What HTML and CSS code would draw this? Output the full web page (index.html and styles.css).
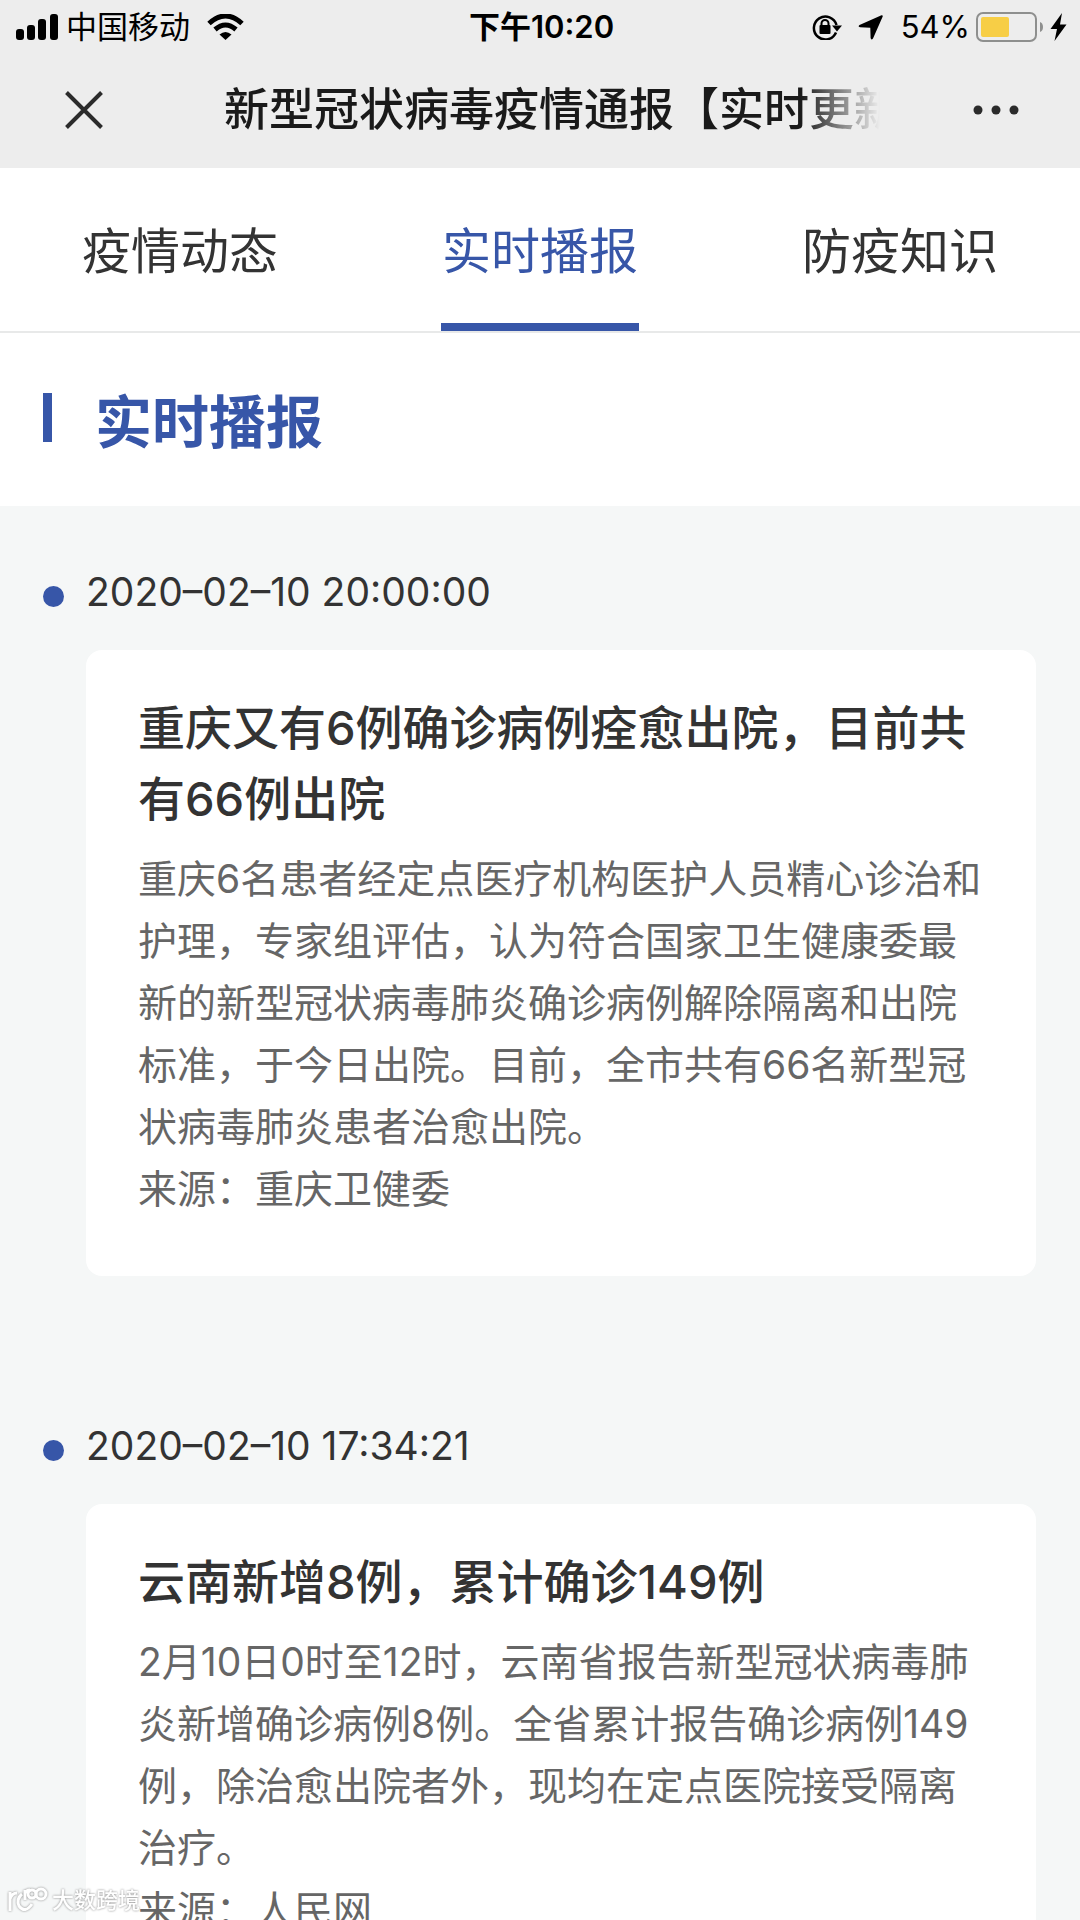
FILE: index.html
```html
<!DOCTYPE html>
<html lang="zh-CN">

<head>
    <meta charset="utf-8">
    <meta name="viewport" content="width=device-width, initial-scale=1">
    <title>新型冠状病毒疫情通报【实时更新】</title>
    <link rel="stylesheet" href="styles.css">
</head>

<body>
    <header class="top">
        <div class="status">
            <div class="status-left">
                <svg class="signal" width="42" height="26" viewBox="0 0 42 26">
                    <rect x="0" y="15" width="8" height="11" rx="3" />
                    <rect x="11" y="11" width="8" height="15" rx="3" />
                    <rect x="22" y="5" width="8" height="21" rx="3" />
                    <rect x="34" y="0" width="8" height="26" rx="3" />
                </svg>
                <span>中国移动</span>
                <svg class="wifi" width="37" height="26" viewBox="0 0 37 26">
                    <path d="M2 9.5 Q18.500 -5.500 35 9.500" fill="none" stroke="#000" stroke-width="5" />
                    <path d="M8 15.500 Q18.500 6.500 29 15.500" fill="none" stroke="#000" stroke-width="5" />
                    <path d="M12.500 20.500 Q18.500 15.500 24.500 20.500 L18.500 26 Z" />
                </svg>
            </div>
            <time class="clock">下午10:20</time>
            <div class="status-right">
                <svg width="30" height="26" viewBox="0 0 30 26">
                    <path d="M24 18.500 A11.500 11.500 0 1 1 24.500 11" fill="none" stroke="#000" stroke-width="2.500" />
                    <path d="M20 11.500 H30 L25 17.500 Z" />
                    <rect x="7.500" y="11" width="11" height="9" rx="1" />
                    <path d="M9.500 12 V9.500 A3.500 3.500 0 0 1 16.500 9.500 V12" fill="none" stroke="#000" stroke-width="2" />
                </svg>
                <svg class="arrow" width="25" height="25" viewBox="0 0 25 25">
                    <path d="M23.500 0.300 Q25 0 24.700 1.500 L15 23.500 Q13.200 25.500 12.600 23 L12.300 12.700 L2 12.300 Q-0.500 11.800 1.500 10 Z" />
                </svg>
                <span>54%</span>
                <svg class="battery" width="68" height="30" viewBox="0 0 68 30">
                    <rect x="1" y="1" width="59" height="28" rx="6" fill="none" stroke="#8e8f8e" stroke-width="2" />
                    <rect x="5" y="5" width="28" height="20" rx="2" fill="#f7ce46" />
                    <path d="M64 10 Q67 11 67 15 Q67 19 64 20 Z" fill="#8e8f8e" />
                </svg>
                <svg width="17" height="28" viewBox="0 0 17 28">
                    <path d="M12 0 L0.500 16 H7 L4.500 28 L16.500 11.500 H10 Z" />
                </svg>
            </div>
        </div>
        <div class="nav">
            <button class="nav-btn" type="button" aria-label="关闭">
                <svg width="38" height="38" viewBox="0 0 38 38">
                    <path d="M1.500 1.500 L36.500 36.500 M36.500 1.500 L1.500 36.500" stroke="#2b2b2b" stroke-width="4" />
                </svg>
            </button>
            <h1 class="nav-title">新型冠状病毒疫情通报【实时更新】</h1>
            <button class="nav-btn nav-more" type="button" aria-label="更多">
                <svg width="46" height="10" viewBox="0 0 46 10" fill="#2b2b2b">
                    <circle cx="5" cy="5" r="4.500" />
                    <circle cx="23" cy="5" r="4.500" />
                    <circle cx="41" cy="5" r="4.500" />
                </svg>
            </button>
        </div>
    </header>

    <nav class="tabs">
        <a class="tab" href="#news">疫情动态</a>
        <a class="tab active" href="#live">实时播报</a>
        <a class="tab" href="#tips">防疫知识</a>
    </nav>

    <main id="live">
        <h2 class="section-title">实时播报</h2>
        <div class="timeline">
            <article class="item">
                <time class="item-time">2020–02–10 20:00:00</time>
                <div class="card">
                    <h3>重庆又有6例确诊病例痊愈出院，目前共有66例出院</h3>
                    <p>重庆6名患者经定点医疗机构医护人员精心诊治和护理，专家组评估，认为符合国家卫生健康委最新的新型冠状病毒肺炎确诊病例解除隔离和出院标准，于今日出院。目前，全市共有66名新型冠状病毒肺炎患者治愈出院。</p>
                    <p>来源：重庆卫健委</p>
                </div>
            </article>
            <article class="item">
                <time class="item-time">2020–02–10 17:34:21</time>
                <div class="card">
                    <h3>云南新增8例，累计确诊149例</h3>
                    <p>2月10日0时至12时，云南省报告新型冠状病毒肺炎新增确诊病例8例。全省累计报告确诊病例149例，除治愈出院者外，现均在定点医院接受隔离治疗。</p>
                    <p>来源：人民网</p>
                </div>
            </article>
        </div>
    </main>

    <div class="watermark">
        <svg width="40" height="26" viewBox="0 0 40 26" fill="none" stroke="#fff" stroke-width="3">
            <path d="M2 5 V24 M2 12 Q4 6 9 6" />
            <path d="M14 7 Q8 12 11 19 Q17 27 24 17" />
            <path d="M17 13 V3 M17 7 Q18 3 22 3" />
            <circle cx="24" cy="7" r="4" />
            <circle cx="33" cy="7" r="5" />
        </svg>
        <span>大数跨境</span>
    </div>
</body>

</html>
```

FILE: styles.css
```css
* {
    box-sizing: border-box;
}

body {
    margin: 0;
    height: 100vh;
    display: flex;
    flex-direction: column;
    overflow: hidden;
    position: relative;
    background-color: #fff;
    color: #333;
    font-family: Inter, "Noto Sans CJK SC", sans-serif;
}

h1,
h2,
h3,
p {
    margin: 0;
}

svg {
    display: block;
    flex: none;
}

/* status bar + wechat title bar */
.top {
    flex: none;
    background-color: #ededed;
    color: #000;
}

.status {
    display: grid;
    grid-template-columns: 1fr auto 1fr;
    align-items: center;
    height: 54px;
    padding: 0 13px 0 16px;
    font-size: 31px;
    line-height: 54px;
}

.status-left,
.status-right {
    display: flex;
    align-items: center;
}

.signal {
    margin-right: 8px;
}

.wifi {
    margin-left: 17px;
}

.clock {
    font-weight: 600;
}

.status-right {
    justify-content: flex-end;
}

.arrow {
    margin: 0 18px 0 16px;
}

.battery {
    margin: 0 6px;
}

.nav {
    display: grid;
    grid-template-columns: 224px 1fr 200px;
    align-items: center;
    height: 114px;
    padding-bottom: 2px;
}

.nav-btn {
    padding: 0 0 0 65px;
    border: none;
    background: none;
    cursor: pointer;
}

.nav-more {
    padding-left: 93px;
}

.nav-title {
    overflow: hidden;
    white-space: nowrap;
    font-size: 45px;
    line-height: 64px;
    font-weight: 500;
    color: #1a1a1a;
    -webkit-mask-image: linear-gradient(to right, #000 88%, transparent);
    mask-image: linear-gradient(to right, #000 88%, transparent);
}

.tabs {
    flex: none;
    display: grid;
    grid-template-columns: repeat(3, 1fr);
    justify-items: center;
    border-bottom: 2px solid #e8e9e9;
}

.tab {
    padding: 12px 1px 0;
    border-bottom: 8px solid transparent;
    font-size: 49px;
    line-height: 143px;
    color: #333;
    text-decoration: none;
}

.tab.active {
    color: #3756a8;
    border-color: #3756a8;
}

main {
    flex: 1;
    min-height: 0;
    overflow: hidden;
    background-color: #f5f7f7;
}

.section-title {
    display: flex;
    align-items: center;
    gap: 43px;
    height: 173px;
    padding: 0 43px 4px;
    background-color: #fff;
    color: #3756a8;
    font-size: 57px;
    font-weight: 700;
}

.section-title::before {
    content: "";
    width: 9px;
    height: 49px;
    background-color: #3756a8;
}

.timeline {
    padding: 62px 44px 0 43px;
}

.item {
    margin-bottom: 146px;
}

.item-time {
    display: flex;
    align-items: center;
    gap: 22px;
    margin-bottom: 35px;
    font-size: 39px;
    line-height: 47px;
}

.item-time::before {
    content: "";
    width: 21px;
    height: 21px;
    margin-top: 10px;
    border-radius: 50%;
    background-color: #3756a8;
}

.card {
    margin-left: 43px;
    padding: 42px 52px 56px;
    border-radius: 16px;
    background-color: #fff;
}

.card h3 {
    margin-bottom: 14px;
    font-size: 47px;
    line-height: 71px;
    font-weight: 500;
}

.card p {
    font-size: 39px;
    line-height: 62px;
    color: #666;
}

.watermark {
    position: absolute;
    left: 8px;
    bottom: 6px;
    display: flex;
    align-items: center;
    gap: 4px;
    color: #fff;
    font-size: 22px;
    line-height: 28px;
    font-weight: 500;
    filter: drop-shadow(0 0 1px #888);
}
```
